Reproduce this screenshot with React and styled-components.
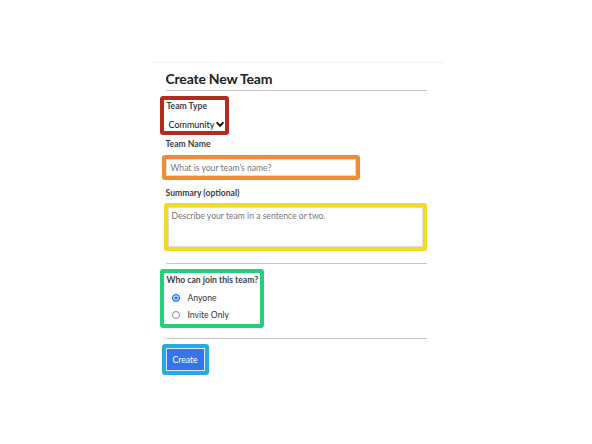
import React from "react";
import styled, { createGlobalStyle } from "styled-components";

const Global = createGlobalStyle`
  html, body { margin: 0; padding: 0; background: #ffffff; }
  body { font-family: Lato, "Open Sans", "Liberation Sans", sans-serif; }
  * { box-sizing: border-box; }
`;

const Card = styled.div`
  width: 293px;
  margin: 62px auto 0;
  border-top: 1px solid #f2f2f2;
  padding: 7px 16px 40px;
  display: flex;
  flex-direction: column;
`;

const Title = styled.h1`
  margin: 0;
  font-size: 14px;
  line-height: 18px;
  font-weight: 700;
  letter-spacing: -0.2px;
  color: #222;
  padding-bottom: 2px;
  border-bottom: 1px solid #c8c8c8;
`;

const Hilite = styled.div`
  border: 4px solid ${(p) => p.$color};
  border-radius: 3px;
  margin-top: ${(p) => p.$top}px;
  margin-left: ${(p) => p.$left}px;
  width: ${(p) => p.$width}px;
  padding: ${(p) => p.$pad || "0"};
  display: flex;
  flex-direction: column;
`;

const Label = styled.div`
  font-size: 8.6px;
  line-height: 12px;
  font-weight: 700;
  white-space: nowrap;
  color: #3b4049;
  margin-top: ${(p) => p.$top || 0}px;
`;

const SelectLike = styled.div`
  display: flex;
  align-items: center;
  gap: 2px;
  margin-top: 5px;
  margin-left: 2px;
  height: 14px;
  font-size: 9px;
  color: #111;
`;

const TextInput = styled.div`
  height: 17px;
  border: 1px solid #dcdcdc;
  background: #fff;
  font-size: 8.6px;
  color: #777;
  padding-left: 4px;
  display: flex;
  align-items: center;
`;

const TextArea = styled.div`
  height: 40px;
  border: 1px solid #dcdcdc;
  background: #fff;
  font-size: 8.6px;
  color: #777;
  padding: 3px 0 0 3px;
`;

const Rule = styled.div`
  height: 1px;
  background: #c8c8c8;
  margin-top: ${(p) => p.$top}px;
`;

const RadioRow = styled.div`
  display: flex;
  align-items: center;
  height: 17px;
  font-size: 8.6px;
  color: #333;
  margin-top: ${(p) => p.$top || 0}px;
`;

const Radio = styled.span`
  width: 8px;
  height: 8px;
  border-radius: 50%;
  margin: 0 8px 0 5px;
  border: 1px solid ${(p) => (p.$on ? "#1a6bea" : "#8a8a8a")};
  background: ${(p) => (p.$on ? "#1a6bea" : "#fff")};
  box-shadow: ${(p) => (p.$on ? "inset 0 0 0 1.5px #cfe0fb" : "none")};
`;

const Button = styled.button`
  width: 39px;
  height: 23px;
  border: 1px solid #d6e6ff;
  background: #3574ec;
  color: #fff;
  font-family: inherit;
  font-size: 8.6px;
  padding: 0;
`;

const Chevron = () => (
  <svg width="9" height="9" viewBox="0 0 10 10">
    <path d="M1.5 3 L5 6.8 L8.5 3" fill="none" stroke="#111" strokeWidth="2.4" strokeLinecap="round" strokeLinejoin="round" />
  </svg>
);

export default function App() {
  return (
    <>
      <Global />
      <Card>
        <Title>Create New Team</Title>

        <Hilite $color="#b32b1c" $top={5} $left={-6} $width={69} $pad="0 0 0 3px">
          <Label>Team Type</Label>
          <SelectLike>
            Community <Chevron />
          </SelectLike>
        </Hilite>

        <Label $top={3}>Team Name</Label>
        <Hilite $color="#f28c33" $top={5} $left={-4} $width={198}>
          <TextInput>What is your team's name?</TextInput>
        </Hilite>

        <Label $top={7}>Summary (optional)</Label>
        <Hilite $color="#f1db25" $top={4} $left={-2} $width={263}>
          <TextArea>Describe your team in a sentence or two.</TextArea>
        </Hilite>

        <Rule $top={12} />

        <Hilite $color="#26cf7c" $top={5} $left={-6} $width={104} $pad="1px 0 1px 3px">
          <Label>Who can join this team?</Label>
          <RadioRow $top={3}>
            <Radio $on />
            Anyone
          </RadioRow>
          <RadioRow>
            <Radio />
            Invite Only
          </RadioRow>
        </Hilite>

        <Rule $top={10} />

        <Hilite $color="#26abe1" $top={5} $left={-4} $width={47}>
          <Button>Create</Button>
        </Hilite>
      </Card>
    </>
  );
}
